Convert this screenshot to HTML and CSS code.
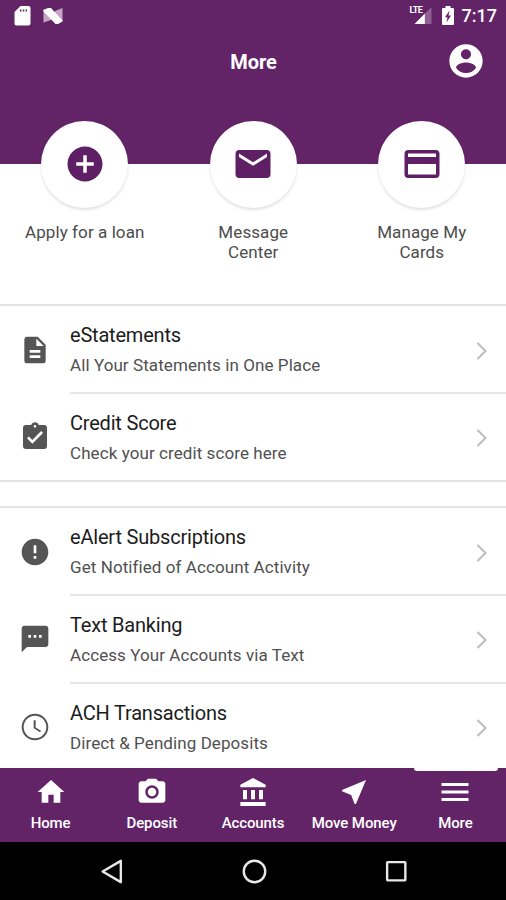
FILE: index.html
```html
<!DOCTYPE html>
<html lang="en">
<head>
<meta charset="utf-8">
<title>More</title>
<link rel="stylesheet" href="styles.css">
</head>
<body>
<div class="app">
  <header class="header">
    <div class="status">
      <div class="status-left">
        <svg class="sd" viewBox="0 0 17 20"><path fill="#fff" fill-rule="evenodd" d="M6.500 0H14.500a2 2 0 0 1 2 2V17.500a2 2 0 0 1-2 2H2.500a2 2 0 0 1-2-2V6ZM6 3.500V5.500H7.500V3.500ZM8.800 3.500V5.500H10.300V3.500ZM11.600 3.500V5.500H13.100V3.500Z"/></svg>
        <svg class="nougat" viewBox="0 0 20 16"><path fill="#c4a6c4" d="M.5 1L8 5V12L.5 14.500ZM19.500 0V13L12 9V3Z"/><path fill="#fff" d="M.5 2L5 0H8L19.500 12.500V13.500L15 16H12.500L.5 3.500Z"/></svg>
      </div>
      <div class="status-right">
        <div class="signal"><span class="lte">LTE</span><svg viewBox="0 0 18 18"><path fill="#8f6091" d="M11 7L18 0V18H11Z"/><path fill="#fff" d="M0 18L11 7V18Z"/></svg></div>
        <svg class="battery" viewBox="0 0 12 20"><path fill="#fff" d="M3.500 0H8.500V2H11a1 1 0 0 1 1 1V18a1 1 0 0 1-1 1H1a1 1 0 0 1-1-1V3a1 1 0 0 1 1-1H3.500Z"/><path fill="#622367" d="M7.500 4.500L3 11.200H5.500L4.500 16.500L9 9.500H6.500Z"/></svg>
        <span class="time">7:17</span>
      </div>
    </div>
    <div class="titlebar">
      <h1>More</h1>
      <svg class="account" viewBox="0 0 24 24"><path d="M12 2C6.480 2 2 6.480 2 12s4.480 10 10 10 10-4.480 10-10S17.520 2 12 2zm0 3c1.660 0 3 1.340 3 3s-1.340 3-3 3-3-1.340-3-3 1.340-3 3-3zm0 14.200c-2.500 0-4.710-1.280-6-3.220.030-1.990 4-3.080 6-3.080 1.990 0 5.970 1.090 6 3.080-1.290 1.940-3.500 3.220-6 3.220z"/></svg>
    </div>
  </header>

  <section class="actions">
    <div class="action"><div class="bubble"><svg viewBox="0 0 24 24"><path d="M12 2C6.480 2 2 6.480 2 12s4.480 10 10 10 10-4.480 10-10S17.520 2 12 2zm5 11h-4v4h-2v-4H7v-2h4V7h2v4h4v2z"/></svg></div><p>Apply for a loan</p></div>
    <div class="action"><div class="bubble"><svg viewBox="0 0 24 24"><path d="M20 4H4c-1.100 0-1.990.900-1.990 2L2 18c0 1.100.900 2 2 2h16c1.100 0 2-.900 2-2V6c0-1.100-.900-2-2-2zm0 4l-8 5-8-5V6l8 5 8-5v2z"/></svg></div><p>Message<br>Center</p></div>
    <div class="action"><div class="bubble"><svg viewBox="0 0 24 24"><path d="M20 4H4c-1.110 0-1.990.890-1.990 2L2 18c0 1.110.890 2 2 2h16c1.110 0 2-.890 2-2V6c0-1.110-.890-2-2-2zm0 14H4v-6h16v6zm0-10H4V6h16v2z"/></svg></div><p>Manage My<br>Cards</p></div>
  </section>

  <main>
    <ul class="list">
      <li><svg class="icon" viewBox="0 0 24 24"><path d="M14 2H6c-1.100 0-1.990.900-1.990 2L4 20c0 1.100.890 2 1.990 2H18c1.100 0 2-.900 2-2V8l-6-6zm2 16H8v-2h8v2zm0-4H8v-2h8v2zm-3-5V3.500L18.500 9H13z"/></svg><div class="text"><h2>eStatements</h2><p>All Your Statements in One Place</p></div><svg class="chev" viewBox="0 0 12 18"><path d="M1.500 1L9.500 9L1.500 17"/></svg></li>
      <li><svg class="icon" viewBox="0 0 24 24"><path d="M19 3h-4.180C14.400 1.840 13.300 1 12 1c-1.300 0-2.400.840-2.820 2H5c-1.100 0-2 .900-2 2v14c0 1.100.900 2 2 2h14c1.100 0 2-.900 2-2V5c0-1.100-.900-2-2-2zm-7 0c.550 0 1 .450 1 1s-.450 1-1 1-1-.450-1-1 .450-1 1-1zm-2 14l-4-4 1.410-1.410L10 14.170l6.590-6.590L18 9l-8 8z"/></svg><div class="text"><h2>Credit Score</h2><p>Check your credit score here</p></div><svg class="chev" viewBox="0 0 12 18"><path d="M1.500 1L9.500 9L1.500 17"/></svg></li>
    </ul>
    <ul class="list second">
      <li><svg class="icon" viewBox="0 0 24 24"><path d="M12 2C6.480 2 2 6.480 2 12s4.480 10 10 10 10-4.480 10-10S17.520 2 12 2zm1 15h-2v-2h2v2zm0-4h-2V7h2v6z"/></svg><div class="text"><h2>eAlert Subscriptions</h2><p>Get Notified of Account Activity</p></div><svg class="chev" viewBox="0 0 12 18"><path d="M1.500 1L9.500 9L1.500 17"/></svg></li>
      <li><svg class="icon" viewBox="0 0 24 24"><path d="M20 2H4c-1.100 0-1.990.900-1.990 2L2 22l4-4h14c1.100 0 2-.900 2-2V4c0-1.100-.900-2-2-2zM9 11H7V9h2v2zm4 0h-2V9h2v2zm4 0h-2V9h2v2z"/></svg><div class="text"><h2>Text Banking</h2><p>Access Your Accounts via Text</p></div><svg class="chev" viewBox="0 0 12 18"><path d="M1.500 1L9.500 9L1.500 17"/></svg></li>
      <li><svg class="icon" viewBox="0 0 24 24"><path d="M11.990 2C6.470 2 2 6.480 2 12s4.470 10 9.990 10C17.520 22 22 17.520 22 12S17.520 2 11.990 2zM12 20.500c-4.700 0-8.500-3.800-8.500-8.500S7.300 3.500 12 3.500s8.500 3.800 8.500 8.500-3.800 8.500-8.500 8.500zM12.500 7H11v6l4.800 3 .750-1.230-4.050-2.400z"/></svg><div class="text"><h2>ACH Transactions</h2><p>Direct &amp; Pending Deposits</p></div><svg class="chev" viewBox="0 0 12 18"><path d="M1.500 1L9.500 9L1.500 17"/></svg></li>
    </ul>
  </main>

  <nav class="tabs">
    <div class="tab"><svg viewBox="0 0 24 24"><path d="M10 20v-6h4v6h5v-8h3L12 3 2 12h3v8z"/></svg><span>Home</span></div>
    <div class="tab"><svg viewBox="0 0 24 24"><circle cx="12" cy="12" r="3.200"/><path d="M9 2L7.170 4H4c-1.100 0-2 .900-2 2v12c0 1.100.900 2 2 2h16c1.100 0 2-.900 2-2V6c0-1.100-.900-2-2-2h-3.170L15 2H9zm3 15c-2.760 0-5-2.240-5-5s2.240-5 5-5 5 2.240 5 5-2.240 5-5 5z"/></svg><span>Deposit</span></div>
    <div class="tab"><svg viewBox="-.5 -.5 24 24"><path d="M4 10v7h3v-7H4zm6 0v7h3v-7h-3zM2 22h19v-3H2v3zm14-12v7h3v-7h-3zm-4.500-9L2 6v2h19V6l-9.500-5z"/></svg><span>Accounts</span></div>
    <div class="tab"><svg viewBox="0 0 24 24"><path d="M21 3L3 10.530v.980l6.840 2.650L12.480 21h.980L21 3z"/></svg><span>Move Money</span></div>
    <div class="tab active"><svg class="menu" viewBox="0 0 24 24"><path d="M3 18h18v-2H3v2zm0-5h18v-2H3v2zm0-7v2h18V6H3z"/></svg><span>More</span></div>
  </nav>
  <footer class="system">
    <svg viewBox="0 0 24 24"><path d="M20 1.800V22.200L2.500 12Z"/></svg>
    <svg viewBox="0 0 24 24"><circle cx="12" cy="12" r="10.300"/></svg>
    <svg viewBox="0 0 24 24"><rect x="3" y="3" width="17.500" height="17.500" rx=".5"/></svg>
  </footer>
</div>
</body>
</html>
```
FILE: styles.css
```css
* { box-sizing: border-box; margin: 0; padding: 0; }
body { background: #fff; font-family: Roboto, "Liberation Sans", sans-serif; }
svg { display: block; flex: none; }
.app { width: 506px; height: 900px; display: flex; flex-direction: column; overflow: hidden; }

.header { height: 163.500px; flex: none; background: #622367; color: #fff; }
.status { height: 32px; display: flex; justify-content: space-between; padding: 0 9px 0 14px; }
.status-left { display: flex; gap: 12px; padding-top: 5.500px; }
.sd { width: 17px; height: 20px; }
.nougat { width: 20px; height: 16px; margin-top: 2px; }
.status-right { display: flex; align-items: flex-start; }
.signal { display: flex; padding-top: 7px; }
.signal svg { width: 18px; height: 17px; margin-left: -13px; }
.lte { font-size: 9px; font-weight: 700; line-height: 7px; letter-spacing: -.6px; width: 17px; }
.battery { width: 12px; height: 20px; margin: 6px 8px 0 10px; }
.time { font-size: 18px; font-weight: 500; line-height: 32px; }
.titlebar { height: 60px; display: grid; grid-template-columns: 1fr auto 1fr; align-items: center; padding: 0 20px 0 21px; }
.titlebar h1 { grid-column: 2; font-size: 20px; font-weight: 700; }
.account { width: 40px; height: 40px; justify-self: end; margin: -2px 0 0; fill: #fff; }

.actions { height: 140.500px; flex: none; display: grid; grid-template-columns: repeat(3, 1fr); padding-left: .5px; }
.action { margin-top: -43px; text-align: center; }
.bubble { width: 87px; height: 87px; margin: 0 auto 14.500px; border-radius: 50%; background: #fff; display: grid; place-items: center; box-shadow: 0 2px 3px rgba(0, 0, 0, .12); }
.bubble svg { width: 42px; height: 42px; fill: #5e1f65; }
.action p { font-size: 17px; line-height: 20px; letter-spacing: .08px; color: #4c4c4c; }

main { flex: 1; min-height: 0; overflow: hidden; }
.list { list-style: none; border-top: 2px solid #e3e3e3; border-bottom: 2px solid #e3e3e3; }
.second { margin-top: 24px; border-bottom: 0; }
.list li { height: 88px; display: flex; padding-left: 19px; }
.list li:first-child { height: 86px; }
.icon { width: 32px; height: 32px; margin-top: 27.500px; fill: #555; }
.text { flex: 1; margin-left: 19px; padding-top: 17px; }
li + li .text, li + li .chev { border-top: 2px solid #e6e6e6; }
li + li .icon { margin-top: 29px; }
.text h2 { font-size: 20px; font-weight: 400; line-height: 24px; letter-spacing: -.2px; color: #1c1c1c; }
.text p { font-size: 17px; line-height: 22px; letter-spacing: .08px; margin-top: 7px; color: #505050; }
.chev { width: 30px; height: 88px; fill: none; stroke: #bdbdbd; stroke-width: 2; padding: 36px 18px 34px 0; overflow: visible; }
li + li .chev { padding: 35px 18px 33px 0; }

.tabs { height: 74px; flex: none; background: #622367; display: grid; grid-template-columns: repeat(5, 1fr); }
.tab { position: relative; display: flex; flex-direction: column; align-items: center; color: #fff; padding-top: 8px; }
.tab svg { width: 32px; height: 32px; fill: #fff; }
.tab .menu { width: 36px; height: 36px; margin: -2px 0; }
.tab span { font-size: 15px; line-height: 18px; margin-top: 6px; font-weight: 500; letter-spacing: -.1px; white-space: nowrap; }
.active::before { content: ""; position: absolute; top: 0; left: 9.500px; right: 8px; height: 3px; background: #fff; border-radius: 0 0 3px 3px; }
.system { height: 58px; flex: none; background: #000; display: flex; justify-content: space-between; padding: 17px 97.500px 0 99.500px; }
.system svg { width: 25px; height: 25px; fill: none; stroke: #e8e8e8; stroke-width: 2.300; stroke-linejoin: round; }
```
